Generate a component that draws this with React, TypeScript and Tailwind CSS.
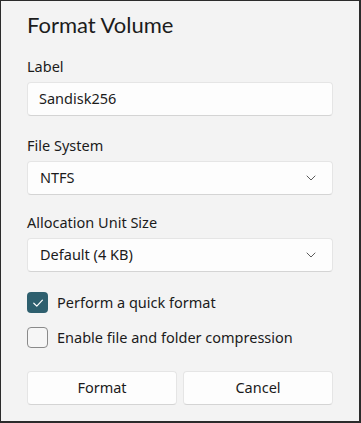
import React from "react";

function Chevron() {
  return (
    <svg width="10" height="6" viewBox="0 0 10 6" fill="none">
      <path d="M1 1l4 4 4-4" stroke="#5c5c5c" strokeWidth="1" strokeLinecap="round" strokeLinejoin="round" />
    </svg>
  );
}

function Select({ value }: { value: string }) {
  return (
    <div className="h-[34px] w-[306px] rounded-[4px] border border-[#e5e5e5] border-b-[#d4d4d4] bg-[#fdfdfd] flex items-center justify-between pl-[12px] pr-[16px] text-[14.5px] text-[#1b1b1b]">
      <span>{value}</span>
      <Chevron />
    </div>
  );
}

export default function App() {
  return (
    <div
      className="w-[361px] h-[423px] bg-[#f3f3f3] border-l border-t border-r-2 border-b-2 border-[#2b2b2b] box-border pl-[26px] text-[#1b1b1b]"
      style={{ fontFamily: '"Noto Sans", "Open Sans", sans-serif' }}
    >
      <div
        className="pt-[10px] text-[22px] leading-[28px] text-[#1c1c1c]"
        style={{ fontFamily: 'Lato, "Noto Sans", sans-serif' }}
      >
        Format Volume
      </div>
      <div className="mt-[17px] text-[14.5px] leading-[20px]">Label</div>
      <div className="mt-[6px] h-[34px] w-[306px] rounded-[4px] border border-[#e5e5e5] border-b-[#d4d4d4] bg-[#fdfdfd] flex items-center pl-[11px] text-[14.5px]">
        Sandisk256
      </div>
      <div className="mt-[19px] text-[14.5px] leading-[20px]">File System</div>
      <div className="mt-[6px]">
        <Select value="NTFS" />
      </div>
      <div className="mt-[17px] text-[14.5px] leading-[20px]">Allocation Unit Size</div>
      <div className="mt-[6px]">
        <Select value="Default (4 KB)" />
      </div>
      <div className="mt-[20px] flex items-center gap-[9px] h-[21px]">
        <div className="w-[21px] h-[21px] rounded-[4px] bg-[#2e5f6e] flex items-center justify-center">
          <svg width="12" height="10" viewBox="0 0 12 10" fill="none">
            <path d="M1.8 5.2l3 2.9 5.6-6" stroke="#ffffff" strokeWidth="1.2" strokeLinecap="round" strokeLinejoin="round" />
          </svg>
        </div>
        <span className="text-[14.5px]">Perform a quick format</span>
      </div>
      <div className="mt-[14px] flex items-center gap-[9px] h-[21px]">
        <div className="w-[21px] h-[21px] rounded-[4px] border border-[#8a8a8a] bg-[#f6f6f6]" />
        <span className="text-[14.5px]">Enable file and folder compression</span>
      </div>
      <div className="mt-[23px] flex gap-[6px] w-[306px]">
        <div className="flex-1 h-[34px] rounded-[4px] border border-[#e5e5e5] border-b-[#d4d4d4] bg-[#fdfdfd] flex items-center justify-center text-[14.5px]">
          Format
        </div>
        <div className="flex-1 h-[34px] rounded-[4px] border border-[#e5e5e5] border-b-[#d4d4d4] bg-[#fdfdfd] flex items-center justify-center text-[14.5px]">
          Cancel
        </div>
      </div>
    </div>
  );
}
